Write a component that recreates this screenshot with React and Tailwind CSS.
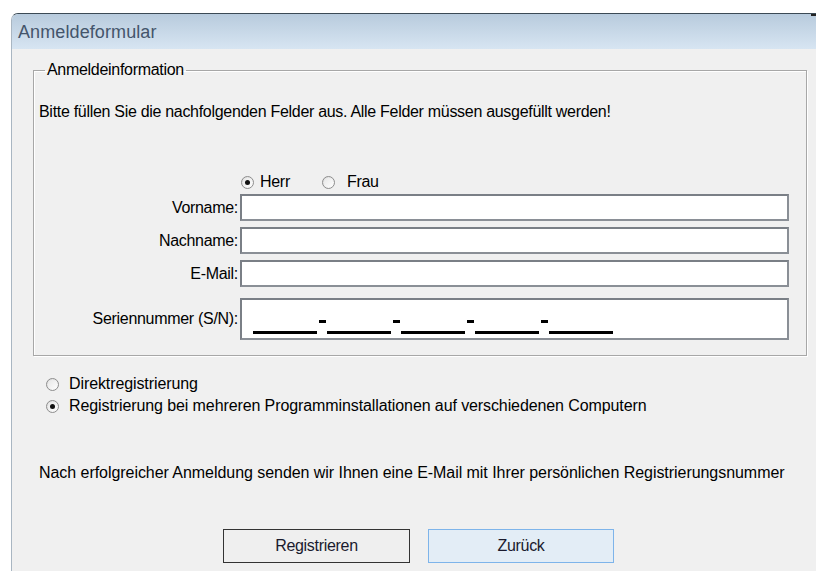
import React, { useState } from 'react';

const font = { fontFamily: '"Liberation Sans", Arial, sans-serif' };

// Kleiner Windows-Radiobutton
const Radio = ({ checked, onClick }) => (
  <span
    onClick={onClick}
    className="relative inline-flex items-center justify-center w-[13px] h-[13px] rounded-full border border-[#8d8d8d] bg-gradient-to-br from-[#dcdcdc] to-white shrink-0"
  >
    <span className="w-[9px] h-[9px] rounded-full bg-gradient-to-br from-[#e8e8e8] to-[#fdfdfd] flex items-center justify-center">
      {checked && <span className="w-[5px] h-[5px] rounded-full bg-[#111]"></span>}
    </span>
  </span>
);

const Field = ({ label, tall }) => (
  <div className="flex items-center">
    <label className="w-[201px] text-right pr-[2px] text-[16px] tracking-[-0.3px] text-black">{label}</label>
    <div className={`w-[549px] ${tall ? 'h-[42px]' : 'h-[27px]'} bg-white border-2 border-[#7a7f86] border-r-[#8a8f96] border-b-[#8a8f96]`}>
      {tall && (
        <div className="flex items-end h-full pb-[4px] pl-[11px]">
          {[0, 1, 2, 3, 4].map((i) => (
            <div key={i} className="flex items-end">
              <span className="block w-[64px] h-[3px] bg-black"></span>
              {i < 4 && (
                <span className="flex items-start justify-center w-[10px] h-[14px]">
                  <span className="block w-[7px] h-[3px] bg-black"></span>
                </span>
              )}
            </div>
          ))}
        </div>
      )}
    </div>
  </div>
);

export default function App() {
  const [anrede, setAnrede] = useState('herr');
  const [modus, setModus] = useState('mehrfach');

  return (
    <div className="w-[816px] h-[571px] bg-white pt-[13px] pl-[11px] overflow-hidden" style={font}>
      <div className="relative h-[558px] rounded-tl-[7px] border-t border-l border-t-[#3b4a55] border-l-[#a9b6c2] bg-[#f0f0f0] overflow-hidden">
        {/* Titelleiste */}
        <div className="h-[35px] bg-gradient-to-b from-[#b8cbdd] to-[#d7e5f2] flex items-center pl-[6px] pt-[2px]">
          <span className="text-[18px] text-[#44556b] tracking-[0.1px]">Anmeldeformular</span>
        </div>
        <div className="absolute top-0 right-0 w-[5px] h-[2px] bg-[#222]"></div>

        {/* Gruppe Anmeldeinformation */}
        <fieldset className="ml-[21px] mt-[13px] w-[774px] h-[294px] border border-[#a7a7a7] shadow-[1px_1px_0_#ffffff,inset_1px_1px_0_#ffffff] px-[5px]">
          <legend className="ml-[6px] px-[2px] text-[16px] leading-[16px] tracking-[-0.3px] text-black">Anmeldeinformation</legend>
          <p className="mt-[22px] text-[16px] tracking-[-0.3px] text-black">
            Bitte füllen Sie die nachfolgenden Felder aus. Alle Felder müssen ausgefüllt werden!
          </p>

          <div className="mt-[49px] ml-[202px] flex items-center h-[18px] text-[16px] tracking-[-0.3px]">
            <Radio checked={anrede === 'herr'} onClick={() => setAnrede('herr')} />
            <span className="ml-[6px]">Herr</span>
            <span className="ml-[32px] flex items-center">
              <Radio checked={anrede === 'frau'} onClick={() => setAnrede('frau')} />
            </span>
            <span className="ml-[12px]">Frau</span>
          </div>

          <div className="mt-[3px] flex flex-col gap-[6px]">
            <Field label="Vorname:" />
            <Field label="Nachname:" />
            <Field label="E-Mail:" />
            <div className="mt-[5px]">
              <Field label="Seriennummer (S/N):" tall />
            </div>
          </div>
        </fieldset>

        {/* Registrierungsart */}
        <div className="ml-[34px] mt-[17px] flex flex-col text-[16px] tracking-[-0.1px] text-black leading-[22px]">
          <div className="flex items-center gap-[10px]">
            <Radio checked={modus === 'direkt'} onClick={() => setModus('direkt')} />
            <span>Direktregistrierung</span>
          </div>
          <div className="flex items-center gap-[10px]">
            <Radio checked={modus === 'mehrfach'} onClick={() => setModus('mehrfach')} />
            <span>Registrierung bei mehreren Programminstallationen auf verschiedenen Computern</span>
          </div>
        </div>

        <p className="ml-[27px] mt-[44px] text-[16px] tracking-[-0.05px] text-black">
          Nach erfolgreicher Anmeldung senden wir Ihnen eine E-Mail mit Ihrer persönlichen Registrierungsnummer
        </p>

        {/* Schaltflächen */}
        <div className="ml-[211px] mt-[44px] flex gap-[18px]">
          <button className="w-[187px] h-[34px] border border-[#333] bg-[#efefef] text-[16px] tracking-[-0.3px] text-[#1a1a2e]">
            Registrieren
          </button>
          <button className="w-[186px] h-[34px] border border-[#7eb4ea] bg-[#e3edf6] text-[16px] tracking-[-0.3px] text-[#1a1a2e]">
            Zurück
          </button>
        </div>
      </div>
    </div>
  );
}
